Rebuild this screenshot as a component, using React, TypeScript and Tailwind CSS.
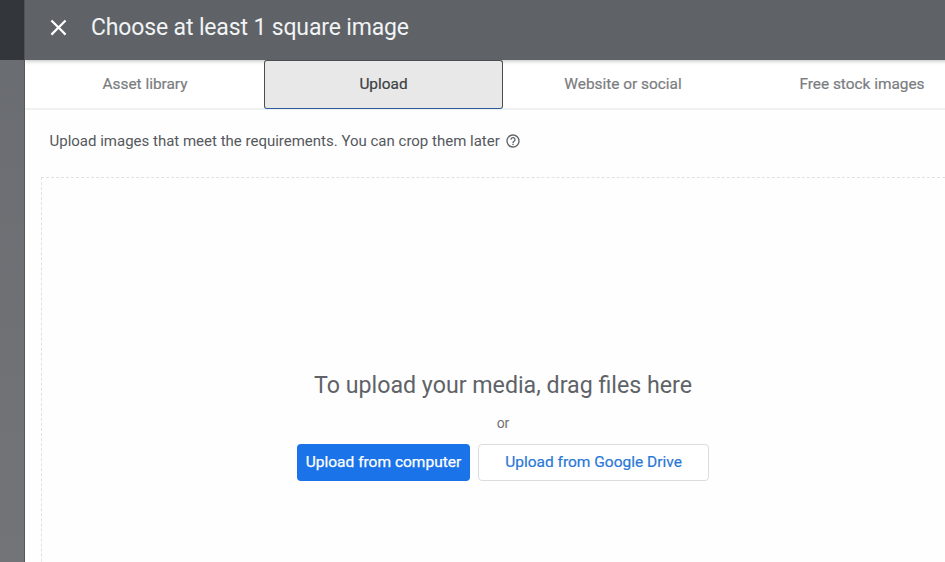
const tabs = ['Asset library', 'Upload', 'Website or social', 'Free stock images'];

const App: React.FC = () => {
  return (
    <div className="flex h-[562px] w-[945px] overflow-hidden bg-white font-[Roboto,sans-serif]">
      <div className="flex w-[25px] shrink-0 flex-col border-r border-[#55585d] bg-gradient-to-b from-[#696c70] to-[#727478]">
        <div className="h-[60px] bg-[#33363b]" />
      </div>

      <main className="w-[956px] shrink-0 bg-[#fefefe]">
        <header className="relative z-10 flex h-[60px] items-center bg-[#5f6368] pb-[5px] shadow-[0_1px_4px_rgba(60,64,67,0.35)]">
          <div className="mx-[21px] flex w-[24px] justify-center">
            <svg viewBox="0 0 24 24" className="h-[27px] w-[27px] shrink-0 fill-white">
              <path d="M19 6.41 17.59 5 12 10.59 6.41 5 5 6.41 10.59 12 5 17.59 6.41 19 12 13.41 17.59 19 19 17.59 13.41 12z" />
            </svg>
          </div>
          <h1 className="text-[23px] leading-none tracking-[-0.15px] text-[#f1f3f4]">Choose at least 1 square image</h1>
        </header>

        <nav className="flex h-[50px] border-b-2 border-[#f0f1f2] bg-white">
          {tabs.map((tab) => (
            <div
              key={tab}
              className={
                tab === 'Upload'
                  ? 'relative z-20 flex h-[49px] w-[239px] items-center justify-center rounded-[3px] border border-[#4a4d52] border-b-[#2b5c9e] bg-[#e8e8e8] text-[15.4px] text-[#3c4043] [-webkit-text-stroke:0.2px_#3c4043]'
                  : 'flex h-[49px] w-[239px] items-center justify-center pl-[1px] text-[15.4px] text-[#7a7d80] [-webkit-text-stroke:0.2px_#7a7d80]'
              }
            >
              {tab}
            </div>
          ))}
        </nav>

        <div className="px-4 pt-[21px]">
          <p className="flex h-[20px] items-center pl-[8.5px] text-[15px] text-[#55585c]">
            Upload images that meet the requirements. You can crop them later
            <svg viewBox="0 0 24 24" className="ml-[5px] h-[16px] w-[16px] fill-[#5f6368]">
              <path d="M11 18h2v-2h-2v2zm1-16C6.48 2 2 6.48 2 12s4.48 10 10 10 10-4.48 10-10S17.52 2 12 2zm0 18c-4.41 0-8-3.59-8-8s3.59-8 8-8 8 3.59 8 8-3.59 8-8 8zm0-14c-2.21 0-4 1.79-4 4h2c0-1.1.9-2 2-2s2 .9 2 2c0 2-3 1.75-3 5h2c0-2.25 3-2.5 3-5 0-2.21-1.79-4-4-4z" />
            </svg>
          </p>

          <section className="mt-[26px] flex h-[500px] flex-col items-center border border-dashed border-[#dfe1e3] pt-[191px]">
            <h2 className="text-[23.2px] leading-[32px] text-[#5f6368]">To upload your media, drag files here</h2>
            <p className="mt-[12px] text-[14px] leading-[20px] text-[#6f7276]">or</p>
            <div className="mt-[11px] flex gap-2">
              <button className="h-[37px] w-[173px] rounded-[4px] bg-[#1a73e8] pt-[1px] text-[15.5px] text-white [-webkit-text-stroke:0.25px_white]">
                Upload from computer
              </button>
              <button className="h-[37px] w-[231px] rounded-[4px] border border-[#dadce0] bg-white pt-[1px] text-[15.5px] text-[#2a78d6] [-webkit-text-stroke:0.2px_#2a78d6]">
                Upload from Google Drive
              </button>
            </div>
          </section>
        </div>
      </main>
    </div>
  );
};

export default App;
